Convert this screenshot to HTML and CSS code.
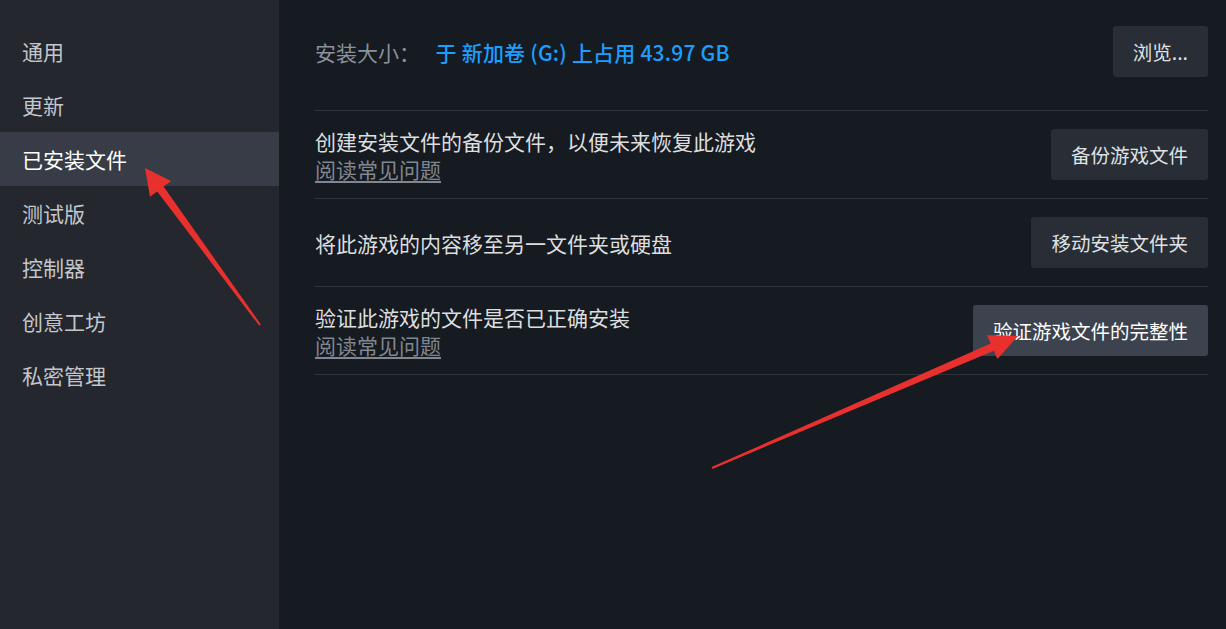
FILE: index.html
```html
<!DOCTYPE html>
<html lang="zh-CN">
<head>
  <meta charset="UTF-8" />
  <meta name="viewport" content="width=device-width, initial-scale=1" />
  <title>属性 - 已安装文件</title>
  <link rel="stylesheet" href="styles.css">
</head>
<body>
  <div id="app">
    <nav class="sidebar">
      <div class="nav-item">通用</div>
      <div class="nav-item">更新</div>
      <div class="nav-item active">已安装文件</div>
      <div class="nav-item">测试版</div>
      <div class="nav-item">控制器</div>
      <div class="nav-item">创意工坊</div>
      <div class="nav-item">私密管理</div>
    </nav>

    <main class="content">
      <div class="row row-size">
        <div class="row-text">
          <span class="size-label">安装大小：</span>
          <span class="size-value">于 新加卷 (G:) 上占用 43.97 GB</span>
        </div>
        <button class="btn">浏览...</button>
      </div>

      <div class="row">
        <div class="row-text">
          <p>创建安装文件的备份文件，以便未来恢复此游戏</p>
          <a class="faq" href="#">阅读常见问题</a>
        </div>
        <button class="btn">备份游戏文件</button>
      </div>

      <div class="row">
        <div class="row-text">
          <p>将此游戏的内容移至另一文件夹或硬盘</p>
        </div>
        <button class="btn">移动安装文件夹</button>
      </div>

      <div class="row">
        <div class="row-text">
          <p>验证此游戏的文件是否已正确安装</p>
          <a class="faq" href="#">阅读常见问题</a>
        </div>
        <button class="btn hover">验证游戏文件的完整性</button>
      </div>
    </main>

    <!-- red annotation arrows drawn over the screenshot -->
    <svg class="arrows" width="1226" height="629" viewBox="0 0 1226 629">
      <polygon fill="#e8312e" points="145,168 171,181 163.6,186.6 260.8,324.4 259.2,325.6 157.2,191.4 150,196.7" />
      <polygon fill="#e8312e" points="1018,336 997.4,359 993.9,350.8 712.4,468.9 711.6,467.1 990.7,343.4 987.2,335.2" />
    </svg>
  </div>
</body>
</html>
```

FILE: styles.css
```css
* {
  margin: 0;
  padding: 0;
  box-sizing: border-box;
}

body {
  background-color: #161a21;
  font-family: 'Noto Sans CJK SC', 'Noto Sans', sans-serif;
  overflow: hidden;
}

#app {
  position: relative;
  display: flex;
  width: 1226px;
  height: 629px;
}

.sidebar {
  width: 279px;
  flex-shrink: 0;
  background-color: #24272e;
  padding-top: 24px;
}

.nav-item {
  height: 54px;
  line-height: 54px;
  padding-left: 22px;
  font-size: 21px;
  color: #c3c6cb;
}

.nav-item.active {
  background-color: #373c46;
  color: #ffffff;
}

.content {
  flex: 1;
  padding: 0 18px 0 36px;
}

.row {
  display: flex;
  align-items: center;
  justify-content: space-between;
  min-height: 88px;
  border-bottom: 1px solid #2c313a;
}

.row-size {
  min-height: 0;
  padding: 26px 0 33px;
}

.row-text p {
  font-size: 21px;
  line-height: 28px;
  color: #dcdedf;
}

.size-label {
  font-size: 21px;
  color: #8b929a;
  margin-right: 12px;
}

.size-value {
  font-size: 21px;
  font-weight: 500;
  letter-spacing: 0.2px;
  color: #1a9fff;
}

.faq {
  display: block;
  font-size: 21px;
  line-height: 28px;
  color: #80878f;
  text-decoration: underline;
  text-underline-offset: 3px;
}

.btn {
  height: 51px;
  padding: 0 20px;
  font-family: inherit;
  font-size: 19.5px;
  color: #dfe1e3;
  background-color: #292d35;
  border: none;
  border-radius: 3px;
  cursor: pointer;
}

.btn.hover {
  background-color: #3d434e;
  color: #ffffff;
}

.arrows {
  position: absolute;
  top: 0;
  left: 0;
  pointer-events: none;
}
```
